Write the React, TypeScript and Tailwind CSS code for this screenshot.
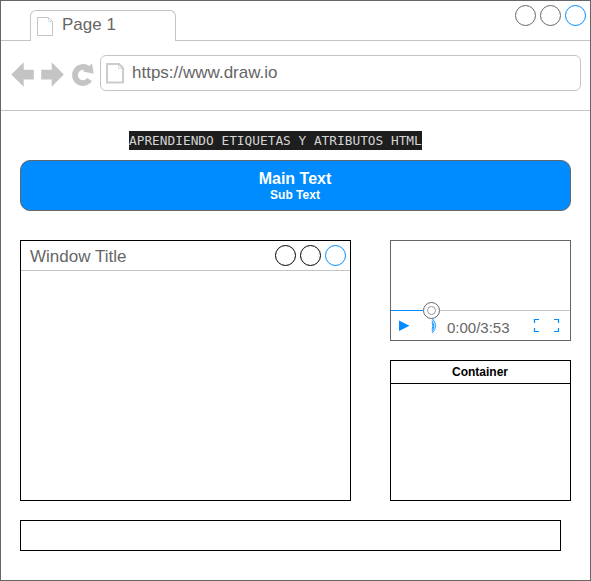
import React from 'react';

function Circle({ className }: { className: string }) {
  return (
    <svg width="21" height="21" viewBox="0 0 21 21" fill="none" stroke="currentColor" className={className}>
      <circle cx="10.5" cy="10.5" r="10" />
    </svg>
  );
}

function WindowButtons({ className }: { className: string }) {
  return (
    <div className="flex gap-1">
      <Circle className={className} />
      <Circle className={className} />
      <Circle className="text-[#008cff]" />
    </div>
  );
}

function BrowserTabs() {
  return (
    <header className="flex h-10 items-end justify-between border-b border-[#c4c4c4] pl-[29px]">
      <div className="-mb-px flex h-[31px] w-[146px] rounded-t-[6px] border border-b-0 border-[#c4c4c4] bg-white pl-[6px]">
        <svg width="17" height="20" viewBox="0 0 17 20" fill="none" stroke="#c4c4c4" className="mt-[6px] shrink-0">
          <path d="M.5 .5H11.5L15.5 4.5V18.5H.5Z" />
          <path d="M11.5 .5V4.5H15.5" strokeOpacity=".6" />
        </svg>
        <span className="ml-2 mt-[4px] text-[17px] leading-[19px]">Page 1</span>
      </div>
      <div className="self-start pr-[4px] pt-[4px]">
        <WindowButtons className="text-[#666666]" />
      </div>
    </header>
  );
}

function AddressBar() {
  return (
    <div className="flex h-[70px] items-start border-b border-[#c4c4c4] pl-[10px] pt-[14px]">
      <svg width="84" height="28" viewBox="0 0 84 28" fill="#c4c4c4" className="mt-[5px] shrink-0">
        <path d="M.3 14.5L12.7 2.3V9.8H22.8V19.6H12.7V26.7Z" />
        <path d="M52.8 14.5L40.7 2.3V9.8H30.2V19.6H40.7V26.7Z" />
        <path d="M78.6 19.5A8 8 0 1 1 77 8.8" fill="none" stroke="#c4c4c4" strokeWidth="5.8" />
        <path d="M80.9 3.4L82.8 13.7L71.9 11.4Z" />
      </svg>
      <div className="ml-[5px] flex h-9 w-[481px] rounded-[6px] border border-[#c4c4c4] pl-[5px]">
        <svg width="19" height="22" viewBox="0 0 19 22" fill="none" stroke="#cccccc" className="mt-[6px] shrink-0">
          <path d="M1 2H13L17 6V20.5H1Z" strokeWidth="2" />
          <path d="M12.5 2V6.5H17" strokeOpacity=".7" />
        </svg>
        <span className="ml-[7px] mt-[7px] text-[17px] leading-[19px]">https://www.draw.io</span>
      </div>
    </div>
  );
}

function VideoPlayer() {
  return (
    <section className="h-[101px] border border-[#666666] pt-[59px]">
      <div className="relative flex h-10">
        <svg width="179" height="40" viewBox="0 0 179 40" fill="none">
          <path d="M0 10.5H32" stroke="#008cff" />
          <path d="M49 10.5H179" stroke="#c4c4c4" />
          <circle cx="40.5" cy="10.5" r="8" stroke="#666666" fill="white" />
          <circle cx="40.5" cy="10.5" r="4" stroke="#999999" />
          <path d="M8 20.5V31L18.5 25.7Z" fill="#008cff" />
          <g stroke="#008cff" strokeWidth=".9">
            <path d="M41 22.5Q43 26 41 29.5" />
            <path d="M41 20.5Q44.6 26 41 31.5" />
            <path d="M41.3 18.5Q47.8 26 41.3 33" />
          </g>
          <path d="M143.5 23V19.5H148M143.5 28V31.5H148M163 19.5H167.5V23M163 31.5H167.5V28" stroke="#008cff" strokeWidth="1.2" />
        </svg>
        <span className="absolute left-14 top-[19px] text-[15px] leading-[17px]">0:00/3:53</span>
      </div>
    </section>
  );
}

export default function App() {
  return (
    <div className="h-[581px] w-[591px] overflow-hidden border border-[#666666] bg-white font-['Liberation_Sans',Arial,sans-serif] text-[#666666]">
      <BrowserTabs />
      <AddressBar />
      <main className="flex flex-col items-start pl-[19px] pt-5">
        <h1 className="ml-[109px] h-[19px] w-[293px] whitespace-nowrap bg-[#1e1e1e] font-['DejaVu_Sans_Mono',monospace] text-[12.8px] leading-[19px] text-[#d4d4d4]">
          APRENDIENDO ETIQUETAS Y ATRIBUTOS HTML
        </h1>
        <div className="mt-[10px] flex h-[51px] w-[551px] flex-col items-center rounded-[10px] border border-[#666666] bg-[#008cff] pr-px pt-2 font-bold text-white">
          <span className="text-[16px] leading-[19px]">Main Text</span>
          <span className="text-[12px] leading-[14px]">Sub Text</span>
        </div>
        <div className="mt-[29px] flex gap-[39px]">
          <section className="h-[261px] w-[331px] border border-black">
            <div className="flex h-[30px] items-start justify-between border-b border-[#c4c4c4] pl-[9px] pr-[4px] pt-[4px]">
              <span className="mt-[2px] text-[17px] leading-[19px]">Window Title</span>
              <WindowButtons className="text-black" />
            </div>
          </section>
          <div className="flex w-[181px] flex-col gap-[19px]">
            <VideoPlayer />
            <section className="h-[141px] border border-black">
              <h2 className="h-[23px] border-b border-black pr-px text-center text-[12px] font-bold leading-[23px] text-black">Container</h2>
            </section>
          </div>
        </div>
        <footer className="mt-[19px] h-[31px] w-[541px] border border-black" />
      </main>
    </div>
  );
}
